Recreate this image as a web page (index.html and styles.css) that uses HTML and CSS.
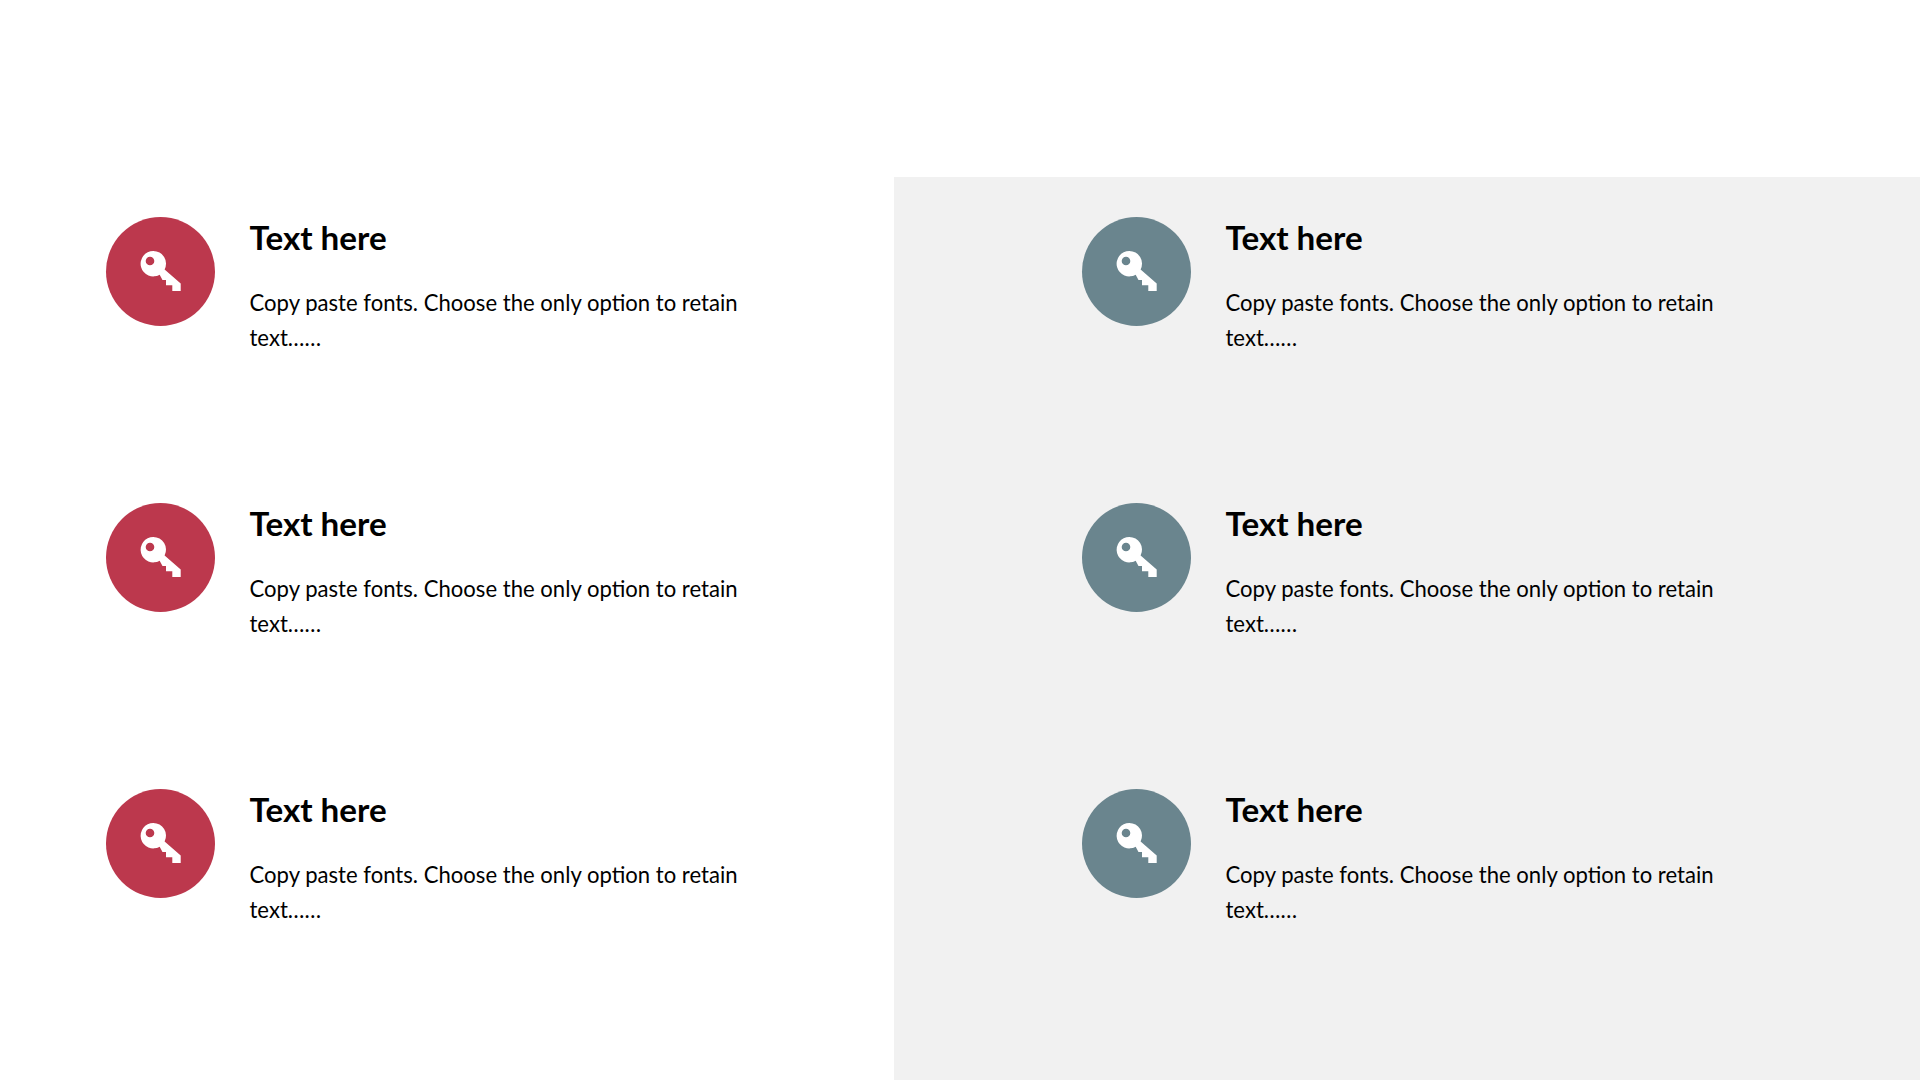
FILE: index.html
```html
<!DOCTYPE html>
<html lang="en">
<head>
<meta charset="utf-8">
<title>Text here</title>
<link rel="stylesheet" href="styles.css">
</head>
<body>
<svg class="defs" aria-hidden="true"><symbol id="key" viewBox="0 0 109 109"><path fill-rule="evenodd" d="M47.3 34A12.7 12.7 0 0 1 58.6 52.5L74.7 66.5V74H66.3V68.3H60V63H56.5L53.65 57.7A12.7 12.7 0 1 1 47.3 34ZM44 39.7A4.3 4.3 0 1 0 44 48.3A4.3 4.3 0 1 0 44 39.7Z"/></symbol></svg>
<main class="page">
  <section class="col col-left">
    <article class="item"><div class="badge red"><svg class="key"><use href="#key"/></svg></div><div class="copy"><h2>Text here</h2><p>Copy paste fonts. Choose the only option to retain text……</p></div></article>
    <article class="item"><div class="badge red"><svg class="key"><use href="#key"/></svg></div><div class="copy"><h2>Text here</h2><p>Copy paste fonts. Choose the only option to retain text……</p></div></article>
    <article class="item"><div class="badge red"><svg class="key"><use href="#key"/></svg></div><div class="copy"><h2>Text here</h2><p>Copy paste fonts. Choose the only option to retain text……</p></div></article>
  </section>
  <section class="col col-right">
    <article class="item"><div class="badge slate"><svg class="key"><use href="#key"/></svg></div><div class="copy"><h2>Text here</h2><p>Copy paste fonts. Choose the only option to retain text……</p></div></article>
    <article class="item"><div class="badge slate"><svg class="key"><use href="#key"/></svg></div><div class="copy"><h2>Text here</h2><p>Copy paste fonts. Choose the only option to retain text……</p></div></article>
    <article class="item"><div class="badge slate"><svg class="key"><use href="#key"/></svg></div><div class="copy"><h2>Text here</h2><p>Copy paste fonts. Choose the only option to retain text……</p></div></article>
  </section>
</main>
</body>
</html>
```
FILE: styles.css
```css
* { box-sizing: border-box; }
html, body { margin: 0; height: 100%; overflow: hidden; background: #fff; }
body { font-family: Lato, "Open Sans", sans-serif; color: #000; }
.defs { display: none; }
.page { display: grid; grid-template-columns: 894px 1026px; height: 1080px; padding-top: 177px; }
.col { padding-top: 39.5px; display: flex; flex-direction: column; gap: 177px; }
.col-left { padding-left: 106px; }
.col-right { padding-left: 188px; background: #f1f1f1; }
.item { display: flex; gap: 34.5px; height: 109px; }
.badge { width: 109px; height: 109px; border-radius: 50%; flex: none; }
.red { background: #bc384d; }
.slate { background: #6a858e; }
.key { display: block; width: 109px; height: 109px; fill: #fff; }
.copy { width: 520px; }
h2 { margin: 0; padding-top: 1.5px; font-size: 33.2px; line-height: 38px; font-weight: 700; }
p { margin: 0; padding-top: 30px; font-size: 22.1px; line-height: 34.5px; font-weight: 400; }
```
